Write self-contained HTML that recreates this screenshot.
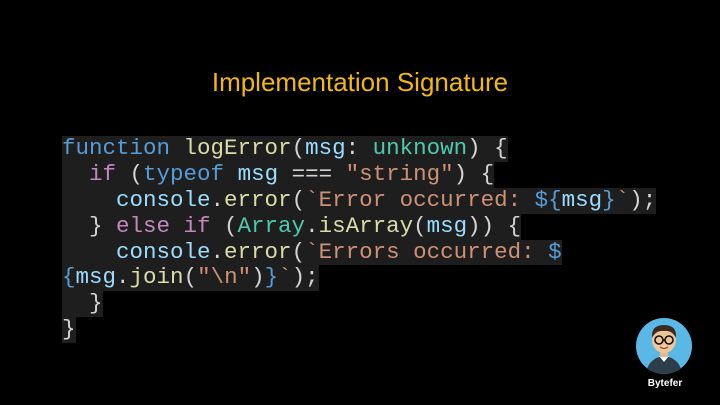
<!DOCTYPE html>
<html><head><meta charset="utf-8"><style>
html,body{margin:0;padding:0;background:#000;width:720px;height:405px;overflow:hidden;position:relative}
.t{position:absolute;left:0;width:720px;top:67px;text-align:center;color:#f2b90c;font:26px "Liberation Sans",sans-serif}
.code{position:absolute;left:62px;top:136px;font:22.5px/25.9px "Liberation Mono",monospace;color:#d4d4d4}
.l{display:block;height:25.9px;white-space:pre}
.l span.b{background:#1e1e1e;display:inline-block;height:25.9px}
.k{color:#569cd6}.f{color:#dcdcaa}.p{color:#9cdcfe}.ty{color:#4ec9b0}.c{color:#c586c0}.s{color:#ce9178}
.av{position:absolute;left:636px;top:318px;width:56px;height:56px;border-radius:50%;background:#5ab8e6;overflow:hidden}
.name{position:absolute;left:620px;top:378px;width:90px;text-align:center;color:#fff;font:bold 10px "Liberation Sans",sans-serif}
</style></head><body>
<div class="t">Implementation Signature</div>
<div class="code">
<span class="l"><span class="b"><span class="k">function</span> <span class="f">logError</span>(<span class="p">msg</span>: <span class="ty">unknown</span>) {</span></span>
<span class="l"><span class="b">  <span class="c">if</span> (<span class="k">typeof</span> <span class="p">msg</span> === <span class="s">"string"</span>) {</span></span>
<span class="l"><span class="b">    <span class="p">console</span>.<span class="f">error</span>(<span class="s">`Error occurred: </span><span class="k">${</span><span class="p">msg</span><span class="k">}</span><span class="s">`</span>);</span></span>
<span class="l"><span class="b">  } <span class="c">else if</span> (<span class="ty">Array</span>.<span class="f">isArray</span>(<span class="p">msg</span>)) {</span></span>
<span class="l"><span class="b">    <span class="p">console</span>.<span class="f">error</span>(<span class="s">`Errors occurred: </span><span class="k">$</span></span></span>
<span class="l"><span class="b"><span class="k">{</span><span class="p">msg</span>.<span class="f">join</span>(<span class="s">"\n"</span>)<span class="k">}</span><span class="s">`</span>);</span></span>
<span class="l"><span class="b">  }</span></span>
<span class="l"><span class="b">}</span></span>
</div>
<div class="av"><svg width="56" height="56" viewBox="0 0 56 56">
<path d="M10 56 Q12 40 28 38 Q44 40 46 56Z" fill="#2e3d4a"/>
<path d="M23 38 L28 44 L33 38Z" fill="#fff"/>
<rect x="24" y="31" width="8" height="8" fill="#e8b88a"/>
<ellipse cx="28" cy="22" rx="12" ry="13" fill="#f0c59a"/>
<path d="M16 20 Q15 7 28 7 Q41 7 40 20 Q36 12 28 13 Q20 12 16 20Z" fill="#3a2a22"/>
<circle cx="23" cy="22" r="4" fill="none" stroke="#111" stroke-width="1.6"/>
<circle cx="33" cy="22" r="4" fill="none" stroke="#111" stroke-width="1.6"/>
<path d="M27 22 H29" stroke="#111" stroke-width="1.5"/>
<path d="M24 29 Q28 32 32 29" stroke="#8a4a30" stroke-width="1.2" fill="none"/>
</svg></div>
<div class="name">Bytefer</div>
</body></html>
